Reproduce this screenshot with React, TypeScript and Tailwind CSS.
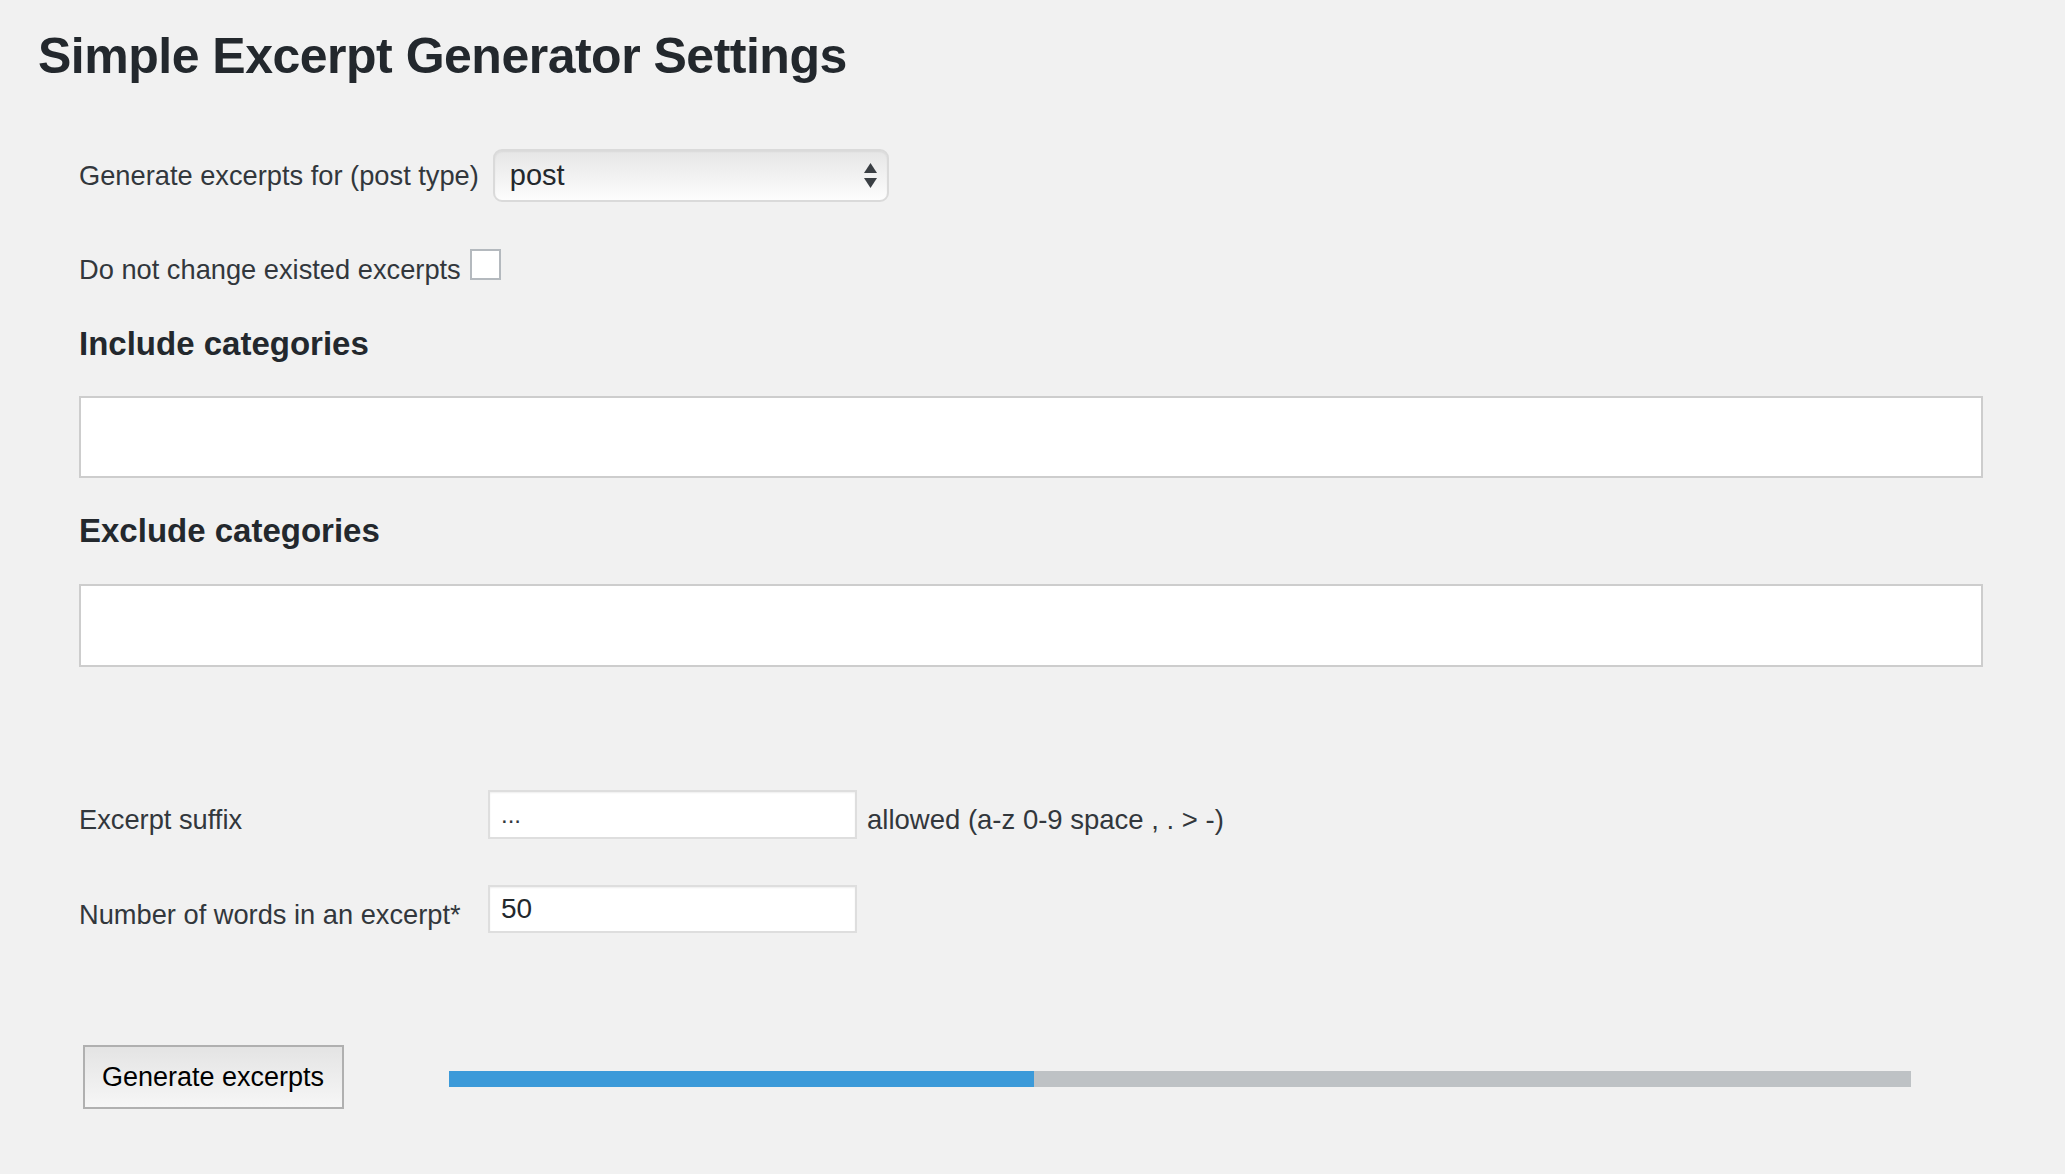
import React from 'react';

const SelectArrows: React.FC = () => (
  <svg width="13" height="26" viewBox="0 0 13 26" className="shrink-0">
    <polygon points="6.5,0 13,10 0,10" fill="#3a3f44" />
    <polygon points="0,15 13,15 6.5,25" fill="#3a3f44" />
  </svg>
);

const App: React.FC = () => {
  const progress = 40;

  return (
    <div className="min-h-screen bg-[#f1f1f1] font-['Liberation_Sans',Arial,sans-serif] text-[#23282d]">
      <div className="pl-[38px] pt-[31px] pb-[40px]">
        <h1 className="text-[50px] leading-[50px] font-bold tracking-[-0.5px]">Simple Excerpt Generator Settings</h1>

        <div className="pl-[41px] pr-[82px]">
          {/* post type */}
          <div className="mt-[68px] flex h-[53px] items-center gap-[14px]">
            <label className="text-[27.25px] leading-[53px] text-[#32373c]">Generate excerpts for (post type)</label>
            <div className="flex h-[53px] w-[396px] items-center justify-between rounded-[9px] border-2 border-[#dadada] bg-gradient-to-b from-[#e6e6e6] to-[#fdfdfd] pl-[15px] pr-[10px] shadow-[inset_0_1px_2px_rgba(0,0,0,0.06)]">
              <span className="text-[29px] leading-[29px] text-[#23282d]">post</span>
              <SelectArrows />
            </div>
          </div>

          {/* keep existing */}
          <div className="mt-[47px] flex items-end gap-[9px]">
            <label className="text-[27.25px] leading-[36px] text-[#32373c]">Do not change existed excerpts</label>
            <span className="mb-[8px] block h-[31px] w-[31px] border-2 border-[#b4b9be] bg-white"></span>
          </div>

          <h2 className="mt-[36px] text-[33px] leading-[40px] font-bold">Include categories</h2>
          <div className="mt-[32px] h-[82px] w-full border-2 border-[#cdcdcd] bg-white"></div>

          <h2 className="mt-[33px] text-[33px] leading-[40px] font-bold">Exclude categories</h2>
          <div className="mt-[33px] h-[83px] w-full border-2 border-[#cdcdcd] bg-white"></div>

          {/* suffix */}
          <div className="mt-[123px] flex items-start">
            <label className="w-[409px] pt-[12px] text-[27.25px] leading-[36px] text-[#32373c]">Excerpt suffix</label>
            <div className="flex h-[49px] w-[369px] items-center border-2 border-[#dedede] bg-white pl-[11px] shadow-[inset_0_1px_2px_rgba(0,0,0,0.07)]">
              <span className="text-[24px] leading-[24px] text-[#32373c]">...</span>
            </div>
            <span className="ml-[10px] pt-[12px] text-[27.5px] leading-[36px] text-[#32373c]">allowed (a-z 0-9 space , . &gt; -)</span>
          </div>

          {/* words */}
          <div className="mt-[46px] flex items-start">
            <label className="w-[409px] pt-[12px] text-[27.25px] leading-[36px] text-[#32373c]">Number of words in an excerpt*</label>
            <div className="flex h-[48px] w-[369px] items-center border-2 border-[#dedede] bg-white pl-[11px] shadow-[inset_0_1px_2px_rgba(0,0,0,0.07)]">
              <span className="text-[28px] leading-[28px] text-[#23282d]">50</span>
            </div>
          </div>

          {/* action */}
          <div className="mt-[112px] flex items-start">
            <button className="ml-[4px] h-[64px] w-[261px] border-2 border-[#b0b0b0] bg-gradient-to-b from-[#e4e4e4] to-[#f6f6f6] text-left pl-[17px] text-[27px] leading-[27px] text-black">
              Generate excerpts
            </button>
            <div className="ml-[105px] mt-[26px] h-[16px] w-[1462px] bg-[#bec2c5]">
              <div className="h-full bg-[#3c9ad9]" style={{ width: `${progress}%` }}></div>
            </div>
          </div>
        </div>
      </div>
    </div>
  );
};

export default App;
